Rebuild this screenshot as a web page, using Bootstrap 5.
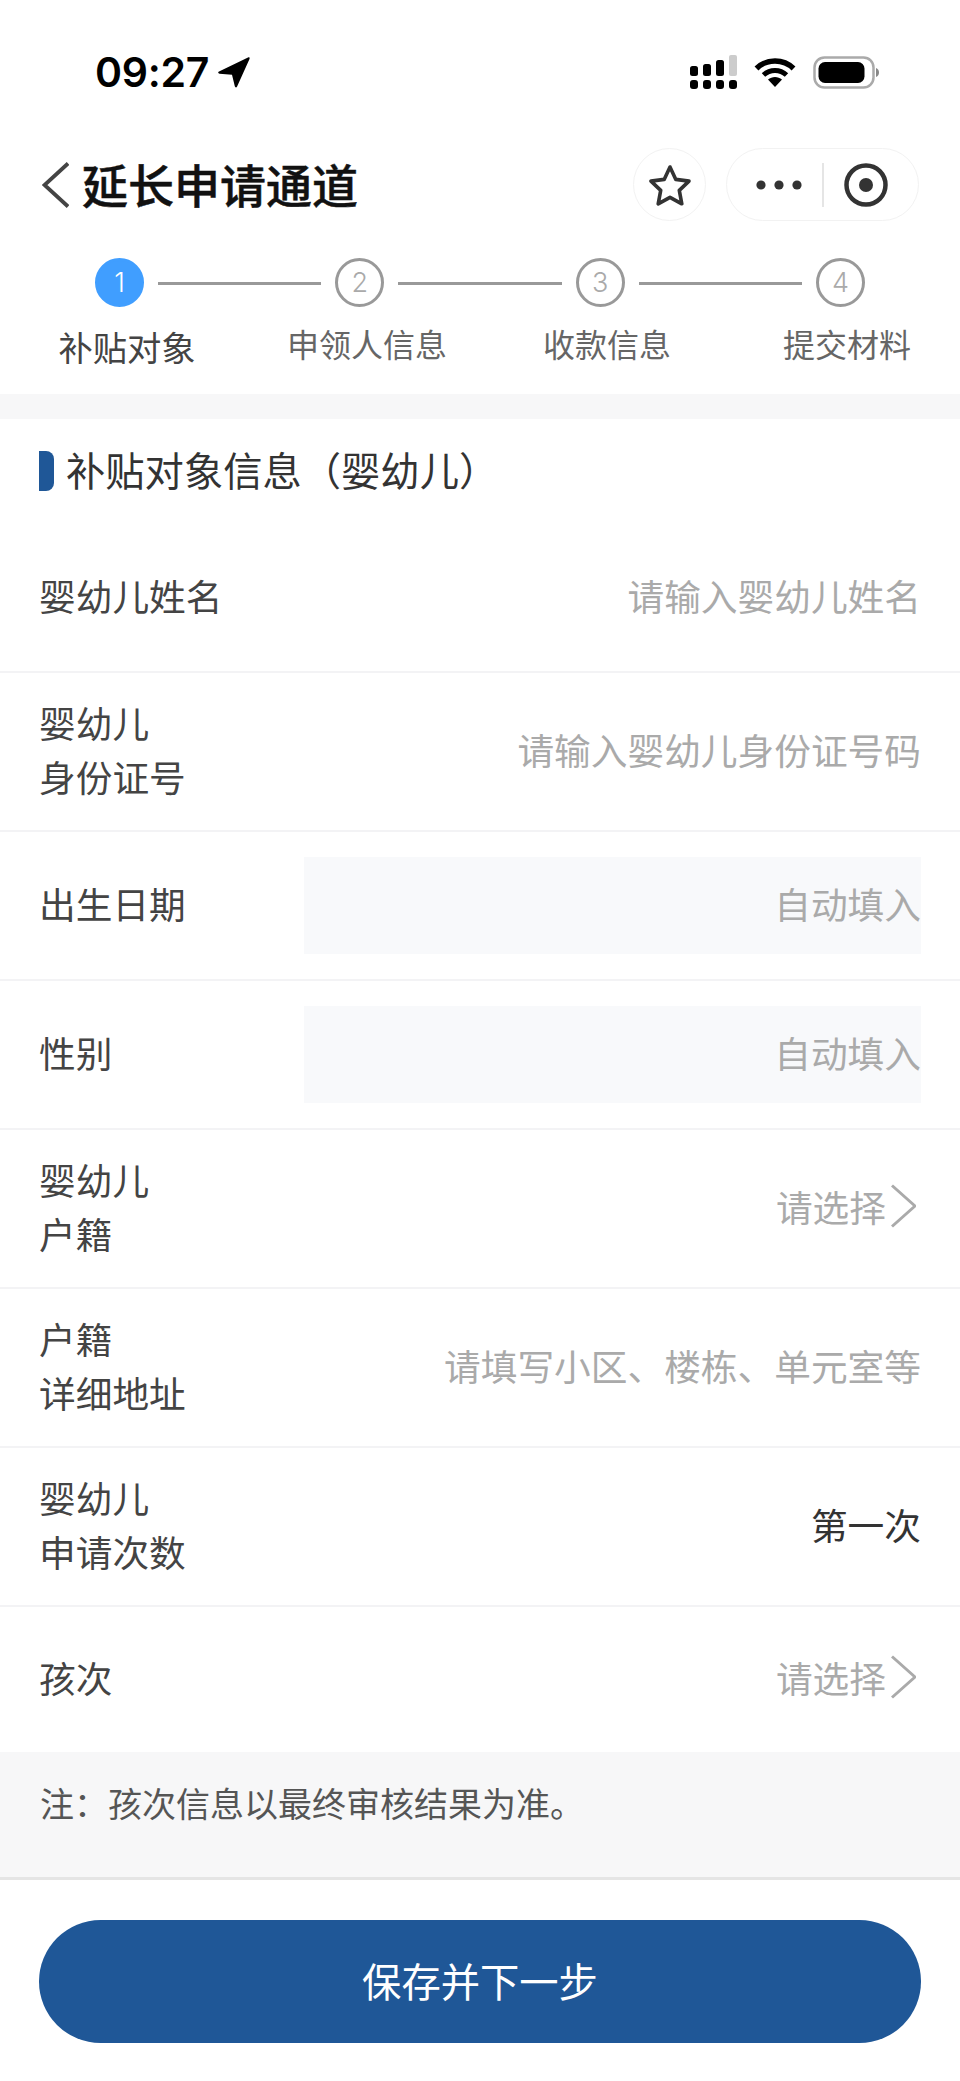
<!DOCTYPE html>
<html lang="zh-CN">
<head>
  <meta charset="UTF-8" />
  <meta name="viewport" content="width=device-width, initial-scale=1.0"/>
  <title>延长申请通道</title>
  <link href="https://cdn.jsdelivr.net/npm/bootstrap@5.3.3/dist/css/bootstrap.min.css" rel="stylesheet" />
  <style>
    body { width: 960px; height: 2081px; overflow: hidden; background: #fff; color: #444;
      font-family: "Noto Sans CJK SC", "Liberation Sans", sans-serif; }

    .status-bar { height: 144px; padding: 0 81px 0 95px; }
    .status-time { font-family: Inter, "Liberation Sans", sans-serif; font-size: 41px; font-weight: 600; color: #000; line-height: 1; letter-spacing: -.3px; }

    .nav-head { height: 73px; margin-top: 4px; padding: 0 42px; }
    .nav-title { font-size: 46px; font-weight: 500; color: #111; line-height: 73px; margin: 0 0 0 13px; padding-bottom: 3px; -webkit-text-stroke: .5px #111; }
    .round-btn { width: 73px; height: 73px; border: 1px solid #f2f2f2; border-radius: 50%; margin-left: auto; margin-right: 1px; }
    .capsule { width: 193px; height: 73px; margin-left: 19px; margin-right: -1px; border: 1px solid #f2f2f2; border-radius: 37px; }

    .step-track { padding: 37px 95px 0; }
    .step-dot { width: 49px; height: 49px; flex: none; border: 3px solid #999; border-radius: 50%; color: #aaa;
      font-family: Inter, "Liberation Sans", sans-serif; font-size: 27px; font-weight: 300; line-height: 1; }
    .step-dot-on { background: #409eff; border-color: #409eff; color: #fff; }
    .step-line { flex: 1; height: 3px; margin: 1px 14px 0; background: #999; }
    .step-names { margin-top: 15px; height: 72px; }
    .step-name { padding-left: 14px; font-size: 32px; line-height: 42px; color: #666; }
    .step-name-on { font-size: 34.300px; line-height: 48px; color: #444; }

    .gap-band { height: 25px; background: #f7f7f8; }

    .sec-head { height: 105px; padding-bottom: 2px; }
    .sec-mark { width: 15px; height: 40px; margin-left: 39px; background: #1f5797; border-radius: 0 8px 8px 0; }
    .sec-title { margin: 0 0 0 12px; padding-bottom: 4px; font-size: 39.300px; font-weight: 400; color: #333; line-height: 1; }

    .fld-row.list-group-item { height: 149px; padding: 0 39px; border-width: 0 0 2px; border-color: #f3f3f5; color: #444; }
    .fld-row.fld-tall { height: 159px; }
    .fld-row.fld-last { height: 145px; border-bottom: 0; }
    .fld-name, .fld-hint, .fld-value { font-size: 36.700px; line-height: 54px; padding-bottom: 5px; }
    .fld-name { color: #444; }
    .fld-hint { color: #aaa; }
    .fld-value { color: #333; }
    .fld-auto { width: 617px; height: 97px; background: #f8f9fb; }
    .fld-pick { margin-right: 5px; }
    .fld-pick svg { margin-left: 5px; }

    .note-band { height: 128px; padding: 23px 40px 0; background: #f7f7f8; border-bottom: 3px solid #e5e5e5; font-size: 34px; line-height: 56px; color: #555; }

    .foot-bar { padding: 40px 39px 0; }
    .save-btn.btn { display: block; width: 100%; height: 123px; padding: 0 0 3px; border: 0; border-radius: 62px; background: #1f5797; color: #fff; font-size: 39.300px; }
  </style>
</head>
<body>

  <div class="status-bar d-flex align-items-center">
    <span class="status-time">09:27</span>
    <svg class="ms-2" width="33" height="32" viewBox="0 0 33 32"><path d="M31 1.500 2 15.500c-1.300.7-1 2 .5 2.200l12.500 1 2.800 11.600c.4 1.400 1.700 1.400 2.300.2L32.500 3c.5-1.300-.2-2-1.500-1.500z" fill="#000"/></svg>
    <div class="d-flex align-items-center ms-auto">
      <svg width="48" height="35" viewBox="0 0 48 35">
        <g fill="#000">
          <rect x="0" y="11" width="8" height="10" rx="2.500"/><rect x="13" y="9" width="8" height="12" rx="2.500"/><rect x="26" y="5" width="8" height="16" rx="2.500"/>
          <rect x="0" y="25" width="8" height="9" rx="3"/><rect x="13" y="25" width="8" height="9" rx="3"/><rect x="26" y="25" width="8" height="9" rx="3"/><rect x="39" y="25" width="8" height="9" rx="3"/>
        </g>
        <rect x="39" y="0" width="8" height="21" rx="2" fill="#ccc"/>
      </svg>
      <svg class="ms-3" width="42" height="31" viewBox="0 0 42 31">
        <path d="M2.500 11.500C12.500 1.500 29.500 1.500 39.500 11.500" fill="none" stroke="#000" stroke-width="5.500"/>
        <path d="M9.500 18C16 12 26 12 32.500 18" fill="none" stroke="#000" stroke-width="5"/>
        <path d="M14 22.500c4-3.500 10-3.500 14 0L21 30z" fill="#000"/>
      </svg>
      <svg style="margin-left:17px" width="66" height="33" viewBox="0 0 66 33">
        <rect x="1.500" y="1.500" width="59" height="30" rx="10" fill="none" stroke="#aaa" stroke-width="2.500"/>
        <rect x="5.500" y="6" width="46" height="21" rx="6.500" fill="#000"/>
        <path d="M63 12c2 .6 3 2.500 3 4.500s-1 3.900-3 4.500z" fill="#888"/>
      </svg>
    </div>
  </div>

  <div class="nav-head d-flex align-items-center">
    <svg width="27" height="46" viewBox="0 0 27 46"><path d="M26 1.500 2.500 23 26 44.500" fill="none" stroke="#444" stroke-width="3.800"/></svg>
    <h1 class="nav-title">延长申请通道</h1>
    <div class="round-btn d-flex align-items-center justify-content-center">
      <svg width="44" height="42" viewBox="0 0 44 42"><path d="M22 3l5.800 12.400 13.200 1.700-9.700 9.300 2.500 13.400L22 33.300 10.200 39.800l2.500-13.400L3 17.100l13.200-1.700z" fill="none" stroke="#333" stroke-width="3.600" stroke-linejoin="round"/></svg>
    </div>
    <div class="capsule d-flex align-items-center flex-shrink-0">
      <svg width="191" height="71" viewBox="0 0 191 71">
        <circle cx="34" cy="36" r="4.600" fill="#333"/><circle cx="52" cy="36" r="4.600" fill="#333"/><circle cx="70" cy="36" r="4.600" fill="#333"/>
        <rect x="95" y="14" width="2" height="44" fill="#e5e5e5"/>
        <circle cx="139" cy="36" r="19.500" fill="none" stroke="#333" stroke-width="4.500"/><circle cx="139" cy="36" r="7" fill="#333"/>
      </svg>
    </div>
  </div>

  <div class="step-track d-flex align-items-center">
    <div class="step-dot step-dot-on d-flex align-items-center justify-content-center">1</div>
    <div class="step-line"></div>
    <div class="step-dot d-flex align-items-center justify-content-center">2</div>
    <div class="step-line"></div>
    <div class="step-dot d-flex align-items-center justify-content-center">3</div>
    <div class="step-line"></div>
    <div class="step-dot d-flex align-items-center justify-content-center">4</div>
  </div>
  <div class="row g-0 step-names text-center">
    <div class="col-3 step-name step-name-on">补贴对象</div>
    <div class="col-3 step-name">申领人信息</div>
    <div class="col-3 step-name">收款信息</div>
    <div class="col-3 step-name">提交材料</div>
  </div>

  <div class="gap-band"></div>

  <div class="sec-head d-flex align-items-center">
    <div class="sec-mark"></div>
    <h2 class="sec-title">补贴对象信息（婴幼儿）</h2>
  </div>

  <div class="list-group list-group-flush">
    <div class="list-group-item fld-row d-flex align-items-center justify-content-between">
      <div class="fld-name">婴幼儿姓名</div>
      <div class="fld-hint">请输入婴幼儿姓名</div>
    </div>
    <div class="list-group-item fld-row fld-tall d-flex align-items-center justify-content-between">
      <div class="fld-name">婴幼儿<br>身份证号</div>
      <div class="fld-hint">请输入婴幼儿身份证号码</div>
    </div>
    <div class="list-group-item fld-row d-flex align-items-center justify-content-between">
      <div class="fld-name">出生日期</div>
      <div class="fld-auto fld-hint d-flex align-items-center justify-content-end">自动填入</div>
    </div>
    <div class="list-group-item fld-row d-flex align-items-center justify-content-between">
      <div class="fld-name">性别</div>
      <div class="fld-auto fld-hint d-flex align-items-center justify-content-end">自动填入</div>
    </div>
    <div class="list-group-item fld-row fld-tall d-flex align-items-center justify-content-between">
      <div class="fld-name">婴幼儿<br>户籍</div>
      <div class="fld-pick fld-hint d-flex align-items-center">请选择
        <svg width="25" height="44" viewBox="0 0 25 44"><path d="M1 1.500 24 22 1 42.500" fill="none" stroke="#aaa" stroke-width="3"/></svg>
      </div>
    </div>
    <div class="list-group-item fld-row fld-tall d-flex align-items-center justify-content-between">
      <div class="fld-name">户籍<br>详细地址</div>
      <div class="fld-hint">请填写小区、楼栋、单元室等</div>
    </div>
    <div class="list-group-item fld-row fld-tall d-flex align-items-center justify-content-between">
      <div class="fld-name">婴幼儿<br>申请次数</div>
      <div class="fld-value">第一次</div>
    </div>
    <div class="list-group-item fld-row fld-last d-flex align-items-center justify-content-between">
      <div class="fld-name">孩次</div>
      <div class="fld-pick fld-hint d-flex align-items-center">请选择
        <svg width="25" height="44" viewBox="0 0 25 44"><path d="M1 1.500 24 22 1 42.500" fill="none" stroke="#aaa" stroke-width="3"/></svg>
      </div>
    </div>
  </div>

  <div class="note-band">注：孩次信息以最终审核结果为准。</div>

  <div class="foot-bar">
    <button type="button" class="btn save-btn">保存并下一步</button>
  </div>

  <script src="https://cdn.jsdelivr.net/npm/bootstrap@5.3.3/dist/js/bootstrap.bundle.min.js"></script>
</body>
</html>
